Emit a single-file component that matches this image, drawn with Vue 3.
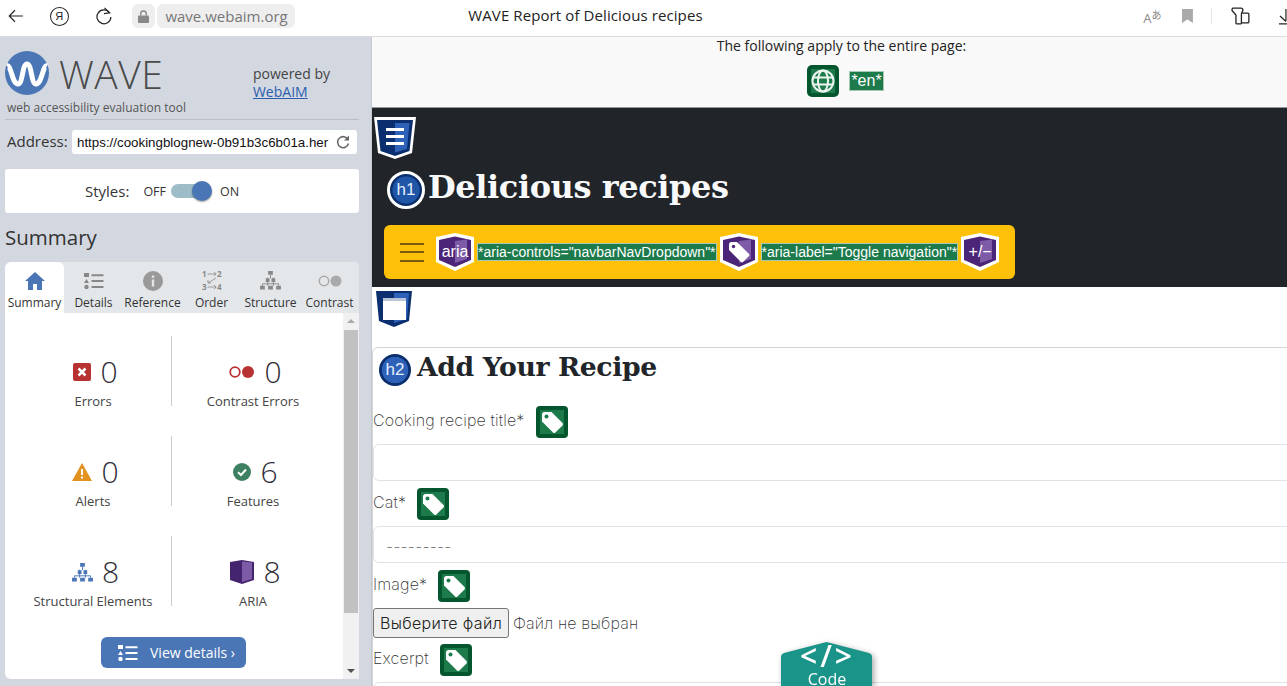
<template>
  <div class="screen">
    <svg class="defs" aria-hidden="true">
      <symbol id="tag" viewBox="0 0 32 32">
        <rect width="32" height="32" rx="4" fill="#04562e" />
        <rect x="4" y="4" width="24" height="24" fill="#1c7a4b" />
        <path d="M6 8.500 Q6 6 8.500 6 L15.500 6 L26.500 17 Q27.600 18.200 26.500 19.400 L19.400 26.500 Q18.200 27.600 17 26.500 L6 15.500Z" fill="#fff" />
        <circle cx="10.500" cy="10.500" r="2" fill="#1c7a4b" />
      </symbol>
      <symbol id="shield" viewBox="0 0 38 38">
        <path d="M0 4 L19 0 L38 4 L38 29 L19 38 L0 29Z" fill="#fff" />
        <path d="M3 7 L19 3.500 L35 7 L35 27 L19 34 L3 27Z" fill="#4b2577" />
        <path d="M19 8 L31 6.500 L31 26 L19 30Z" fill="#7d5ba6" />
      </symbol>
      <symbol id="list" viewBox="0 0 20 16">
        <path d="M0 0h5v4H0z M2.500 6 L5 10H0z" fill="currentColor" />
        <circle cx="2.500" cy="14" r="2.200" fill="currentColor" />
        <path d="M7.500 1.300h12v2h-12z M7.500 7h12v2h-12z M7.500 13h12v2h-12z" fill="currentColor" />
      </symbol>
      <symbol id="tree" viewBox="0 0 22 20">
        <path d="M8.500 0h5v4h-5z M6 7.500h4v4H6z M12 7.500h4v4h-4z M0 15.500h5v4H0z M8.500 15.500h5v4h-5z M17 15.500h5v4h-5z" fill="currentColor" />
        <path d="M11 4v3.500 M8 7v8.500 M14 7v8.500 M2.500 15.500v-2h17v2" stroke="currentColor" stroke-width="1" fill="none" />
      </symbol>
    </svg>

    <header class="chrome">
      <svg class="chrome-back" viewBox="0 0 16 14" width="16" height="14"><path d="M15 7H1.500M7 1.200 1.200 7 7 12.800" fill="none" stroke="#222" stroke-width="1.100" /></svg>
      <span class="chrome-ya">Я</span>
      <svg class="chrome-reload" viewBox="0 0 18 18" width="18" height="18"><path d="M14.500 5.500A7 7 0 1 0 16 10" fill="none" stroke="#222" stroke-width="1.200" /><path d="M9.500 0.800 14.800 5.800 9 6.600" fill="none" stroke="#222" stroke-width="1.200" /></svg>
      <span class="chrome-lock">
        <svg viewBox="0 0 12 14" width="11" height="13"><path d="M3 6V4a3 3 0 0 1 6 0v2" fill="none" stroke="#888" stroke-width="1.500" /><rect y="6" width="12" height="8" rx="1" fill="#888" /></svg>
      </span>
      <span class="chrome-url">wave.webaim.org</span>
      <span class="chrome-title">WAVE Report of Delicious recipes</span>
      <span class="chrome-translate">A<small>あ</small></span>
      <svg class="chrome-mark" viewBox="0 0 11 14" width="11" height="14"><path d="M0 0h11v14L5.500 10.500 0 14z" fill="#aaa" /></svg>
      <span class="chrome-sep"></span>
      <svg class="chrome-collections" viewBox="0 0 19 18" width="19" height="18"><path d="M2 1h8q2 0 2 2l-1.500 4v9q0 1-1 1H6q-1 0-1-1V8L1 3.500Q1 1 2 1Z M11.500 6H17q1 0 1 1v8q0 1-1 1h-6" fill="none" stroke="#222" stroke-width="1.300" /></svg>
      <svg class="chrome-download" viewBox="0 0 8 18" width="8" height="18"><path d="M7 2v12M1 9l6 5.500M0 17h8" fill="none" stroke="#222" stroke-width="1.200" /></svg>
    </header>

    <div class="body">
      <aside class="side">
        <div class="brand">
          <div class="brand-main">
            <div class="brand-logo">
              <svg viewBox="0 0 44 44" width="44" height="44">
                <circle cx="22" cy="22" r="22" fill="#4a76b5" />
                <path d="M2 15 C6 13 7 33 13 33 C18 33 17 13 22 13 C27 13 26 33 31 33 C37 33 38 13 42 15" fill="none" stroke="#fff" stroke-width="5" />
              </svg>
              <span class="brand-name">WAVE</span>
            </div>
            <div class="brand-tag">web accessibility evaluation tool</div>
          </div>
          <div class="brand-by">powered by<br /><a href="#">WebAIM</a></div>
        </div>
        <div class="address">
          <label>Address:</label>
          <div class="address-field">
            <span>https://cookingblognew-0b91b3c6b01a.her</span>
            <svg viewBox="0 0 14 14" width="14" height="14"><path d="M12 4.500A5.500 5.500 0 1 0 12.500 8.500" fill="none" stroke="#666" stroke-width="1.500" /><path d="M13 0.500V5.500H8z" fill="#666" /></svg>
          </div>
        </div>
        <div class="styles">
          <span class="styles-label">Styles:</span>
          <span class="styles-opt">OFF</span>
          <span class="toggle"><i></i></span>
          <span class="styles-opt">ON</span>
        </div>
        <h2 class="side-title">Summary</h2>

        <section class="panel">
          <nav class="tabs">
            <div v-for="tab in tabs" :key="tab.label" class="tab" :class="{ 'tab--on': tab.label === 'Summary' }">
              <span class="tab-icon">
                <svg v-if="tab.label === 'Summary'" viewBox="0 0 20 18" width="20" height="18"><path d="M10 0 20 9h-3v9h-5v-6H8v6H3V9H0Z" fill="#4a76b5" /></svg>
                <svg v-else-if="tab.label === 'Details'" width="20" height="16"><use href="#list" /></svg>
                <svg v-else-if="tab.label === 'Reference'" viewBox="0 0 20 20" width="20" height="20"><circle cx="10" cy="10" r="10" fill="#999" /><path d="M8.800 4.500h2.400v2.300H8.800z M8.800 8.500h2.400v7H8.800z" fill="#e4e7ea" /></svg>
                <svg v-else-if="tab.label === 'Order'" class="order-icon" viewBox="0 0 20 21" width="20" height="21">
                  <text x="0" y="7">1</text>
                  <text x="15" y="7">2</text>
                  <text x="0" y="20">3</text>
                  <text x="15" y="20">4</text>
                  <path d="M5.500 4H14M12 2l2.200 2L12 6 M5.500 17H14M12 15l2.200 2L12 19 M14 8 6 13M6 10v3h3" fill="none" stroke="#888" stroke-width=".8" />
                </svg>
                <svg v-else-if="tab.label === 'Structure'" width="21" height="19"><use href="#tree" /></svg>
                <svg v-else viewBox="0 0 24 12" width="24" height="12"><circle cx="6" cy="6" r="4.700" fill="none" stroke="#aaa" stroke-width="1.500" /><circle cx="18" cy="6" r="5.500" fill="#aaa" /></svg>
              </span>
              <span class="tab-label">{{ tab.label }}</span>
            </div>
          </nav>
          <div class="panel-body">
            <div class="panel-main">
              <div class="stats">
                <div v-for="stat in stats" :key="stat.label" class="stat">
                  <div class="stat-top">
                    <svg v-if="stat.kind === 'error'" viewBox="0 0 18 18" width="18" height="18"><rect width="18" height="18" rx="2" fill="#b93232" /><path d="M5.500 5.500l7 7M12.500 5.500l-7 7" stroke="#fff" stroke-width="2.500" /></svg>
                    <svg v-else-if="stat.kind === 'contrast'" viewBox="0 0 26 12" width="26" height="12"><circle cx="6" cy="6" r="4.800" fill="none" stroke="#b93232" stroke-width="1.800" /><circle cx="19" cy="6" r="6" fill="#b93232" /></svg>
                    <svg v-else-if="stat.kind === 'alert'" viewBox="0 0 20 18" width="20" height="18"><path d="M10 0 20 18H0Z" fill="#e2921e" /><path d="M9 6h2v6H9z M9 13.500h2v2H9z" fill="#fff" /></svg>
                    <svg v-else-if="stat.kind === 'feature'" viewBox="0 0 18 18" width="18" height="18"><circle cx="9" cy="9" r="9" fill="#3d8062" /><path d="M5 9.200 8 12l5-5.500" fill="none" stroke="#fff" stroke-width="2" /></svg>
                    <svg v-else-if="stat.kind === 'tree'" class="stat-tree" width="21" height="19"><use href="#tree" /></svg>
                    <svg v-else viewBox="0 0 24 24" width="24" height="24"><path d="M0 2 12 0 24 2V20L12 24 0 20Z" fill="#45246f" /><path d="M12 1.500 22 2.500V19L12 22Z" fill="#7d5ba6" /></svg>
                    <span class="stat-num">{{ stat.count }}</span>
                  </div>
                  <div class="stat-label">{{ stat.label }}</div>
                </div>
              </div>
              <button type="button" class="view-btn">
                <svg width="20" height="16"><use href="#list" /></svg>
                <span>View details ›</span>
              </button>
            </div>
            <div class="scroll">
              <span class="scroll-up"></span>
              <span class="scroll-thumb"></span>
              <span class="scroll-down"></span>
            </div>
          </div>
        </section>
      </aside>

      <main class="main">
        <div class="page-notes">
          <p>The following apply to the entire page:</p>
          <div class="page-notes-row">
            <span class="globe">
              <svg viewBox="0 0 24 24" width="24" height="24"><circle cx="12" cy="12" r="10.500" fill="none" stroke="#eef5f0" stroke-width="2" /><ellipse cx="12" cy="12" rx="5" ry="10.500" fill="none" stroke="#eef5f0" stroke-width="2" /><path d="M2 8.500h20M2 15.500h20" stroke="#eef5f0" stroke-width="2" /></svg>
            </span>
            <span class="code-mark">*en*</span>
          </div>
        </div>

        <div class="hero">
          <svg class="nav-icon" viewBox="0 0 42 42" width="42" height="42">
            <path d="M0 0h42L38 36 21 42 4 36Z" fill="#fff" />
            <path d="M3 3h36L35.500 34 21 39 6.500 34Z" fill="#0a2e6e" />
            <path d="M21 6h14.500L33 32 21 35.500Z" fill="#2d62b8" />
            <path d="M12 11h18v3H12z M12 18h18v3H12z M12 25h18v3H12z" fill="#fff" />
          </svg>
          <div class="hero-title">
            <span class="badge badge--h1">h1</span>
            <h1>Delicious recipes</h1>
          </div>
          <div class="navbar">
            <span class="burger"><i></i><i></i><i></i></span>
            <span class="aria-icon"><svg width="38" height="38"><use href="#shield" /></svg><b>aria</b></span>
            <span class="code-mark">*aria-controls="navbarNavDropdown"*</span>
            <span class="aria-icon">
              <svg width="38" height="38"><use href="#shield" /></svg>
              <svg class="aria-tag" viewBox="0 0 22 22" width="22" height="22"><path d="M1 3.500Q1 1 3.500 1H9l12 12q.8 1 0 2l-6 6q-1 .8-2 0L1 9Z" fill="#fff" /><circle cx="5.500" cy="5.500" r="1.700" fill="#4b2577" /></svg>
            </span>
            <span class="code-mark">*aria-label="Toggle navigation"*</span>
            <span class="aria-icon"><svg width="38" height="38"><use href="#shield" /></svg><b>+/−</b></span>
          </div>
        </div>

        <div class="content">
          <svg class="window-icon" viewBox="0 0 36 36" width="36" height="36">
            <path d="M0 0h36L33 30 18 36 3 30Z" fill="#0a2e6e" />
            <path d="M18 2h15L31 28 18 32Z" fill="#2d62b8" />
            <path d="M7 7h23v22H7z" fill="#fff" />
            <path d="M7 7h23v3H7z" fill="#b9c4d6" />
          </svg>
          <form class="recipe-card" @submit.prevent>
            <div class="recipe-title">
              <span class="badge badge--h2">h2</span>
              <h2>Add Your Recipe</h2>
            </div>
            <div class="field-label"><label>Cooking recipe title*</label><svg class="tag" width="32" height="32"><use href="#tag" /></svg></div>
            <div class="control"></div>
            <div class="field-label"><label>Cat*</label><svg class="tag" width="32" height="32"><use href="#tag" /></svg></div>
            <div class="control control--select">---------</div>
            <div class="field-label"><label>Image*</label><svg class="tag" width="32" height="32"><use href="#tag" /></svg></div>
            <div class="file">
              <button type="button">Выберите файл</button>
              <span>Файл не выбран</span>
            </div>
            <div class="field-label"><label>Excerpt</label><svg class="tag" width="32" height="32"><use href="#tag" /></svg></div>
            <div class="control"></div>
          </form>
        </div>

        <div class="code-tab">
          <svg viewBox="0 0 91 44" width="91" height="44" preserveAspectRatio="none"><path d="M0 15 Q0 12 3 11 L45.500 0 L88 11 Q91 12 91 15 V44 H0Z" fill="#1a9488" /></svg>
          <span class="code-tab-glyph">&lt;/&gt;</span>
          <span class="code-tab-label">Code</span>
        </div>
      </main>
    </div>
  </div>
</template>

<script setup>
const tabs = [
  { label: 'Summary' },
  { label: 'Details' },
  { label: 'Reference' },
  { label: 'Order' },
  { label: 'Structure' },
  { label: 'Contrast' }
]

const stats = [
  { kind: 'error', count: 0, label: 'Errors' },
  { kind: 'contrast', count: 0, label: 'Contrast Errors' },
  { kind: 'alert', count: 0, label: 'Alerts' },
  { kind: 'feature', count: 6, label: 'Features' },
  { kind: 'tree', count: 8, label: 'Structural Elements' },
  { kind: 'aria', count: 8, label: 'ARIA' }
]
</script>

<style>
html,
body {
  margin: 0;
  overflow: hidden;
}
</style>

<style scoped>
.screen {
  width: 1287px;
  height: 686px;
  overflow: hidden;
  display: flex;
  flex-direction: column;
  font-family: "Open Sans", sans-serif;
  color: #333;
  background: #fff;
}

.defs {
  width: 0;
  height: 0;
  position: absolute;
}

/* browser bar */
.chrome {
  height: 32px;
  flex: none;
  display: flex;
  align-items: center;
  border-bottom: 1px solid #dcdcdc;
  background: #fff;
  padding-left: 8px;
  padding-bottom: 4px;
  color: #222;
}

.chrome-ya {
  margin-left: 26px;
  width: 17px;
  height: 17px;
  border: 1.200px solid #222;
  border-radius: 50%;
  font-size: 11px;
  line-height: 17px;
  text-align: center;
  font-family: "Liberation Sans", sans-serif;
}

.chrome-reload {
  margin-left: 26px;
}

.chrome-lock {
  margin-left: 19px;
  width: 24px;
  height: 24px;
  border-radius: 6px;
  background: #eee;
  display: flex;
  align-items: center;
  justify-content: center;
}

.chrome-url {
  margin-left: 2px;
  width: 139px;
  height: 24px;
  box-sizing: border-box;
  padding-left: 8px;
  border-radius: 6px;
  background: #eee;
  color: #777;
  font-size: 15px;
  line-height: 24px;
  white-space: nowrap;
}

.chrome-title {
  margin: 0 0 2px 173px;
  width: 234px;
  white-space: nowrap;
  font-size: 15px;
  letter-spacing: 0.1px;
  color: #222;
}

.chrome-translate {
  margin-left: 441px;
  width: 18px;
  color: #888;
  font-size: 13px;
  line-height: 14px;
  white-space: nowrap;
}

.chrome-translate small {
  font-size: 10px;
  font-family: "Noto Sans CJK JP", sans-serif;
  vertical-align: 4px;
}

.chrome-mark {
  margin-left: 21px;
}

.chrome-sep {
  margin-left: 18px;
  width: 1px;
  height: 16px;
  background: #e4e4e4;
}

.chrome-collections {
  margin-left: 19px;
}

.chrome-download {
  margin-left: 29px;
}

.body {
  flex: 1;
  min-height: 0;
  display: flex;
}

/* left panel */
.side {
  width: 372px;
  flex: none;
  box-sizing: border-box;
  background: #d3d8e0;
  padding: 0 12px 0 5px;
  border-right: 1px solid #c5c9cf;
}

.brand {
  display: flex;
  justify-content: space-between;
  height: 83px;
  box-sizing: border-box;
  padding-top: 14px;
  border-bottom: 1px solid #b9bdc4;
}

.brand-logo {
  display: flex;
  align-items: center;
  height: 44px;
  gap: 10px;
}

.brand-name {
  font-weight: 300;
  font-size: 39px;
  letter-spacing: 0.5px;
  color: #4a4a4a;
}

.brand-tag {
  font-size: 12px;
  color: #555;
  margin: 4px 0 0 2px;
  white-space: nowrap;
}

.brand-by {
  font-size: 14px;
  line-height: 18px;
  color: #444;
  padding: 14px 29px 0 0;
}

.brand-by a {
  color: #2a5db0;
}

.address {
  display: flex;
  align-items: center;
  justify-content: space-between;
  margin-top: 10px;
  padding-left: 2px;
}

.address label {
  font-size: 15px;
  color: #333;
  padding-bottom: 2px;
}

.address-field {
  width: 285px;
  height: 24px;
  box-sizing: border-box;
  background: #fff;
  border-radius: 3px;
  display: flex;
  align-items: center;
  justify-content: space-between;
  padding: 0 7px 0 5px;
  margin-right: 2px;
  font-family: "Liberation Sans", sans-serif;
  font-size: 13.330px;
  color: #111;
  white-space: nowrap;
  overflow: hidden;
}

.address-field span {
  width: 252px;
  overflow: hidden;
}

.styles {
  margin-top: 15px;
  height: 44px;
  background: #fff;
  border-radius: 3px;
  display: flex;
  align-items: center;
  padding-left: 80px;
}

.styles-label {
  font-size: 15px;
  margin-right: 14px;
}

.styles-opt {
  font-size: 12.500px;
}

.toggle {
  position: relative;
  width: 34px;
  height: 14px;
  border-radius: 7px;
  background: #9dbcc8;
  margin: 0 15px 0 5px;
}

.toggle i {
  position: absolute;
  right: -7px;
  top: -3px;
  width: 20px;
  height: 20px;
  border-radius: 50%;
  background: #4a76b5;
  box-shadow: 0 1px 2px rgba(0, 0, 0, 0.4);
}

.side-title {
  margin: 9px 0 10px;
  font-size: 20.500px;
  line-height: 30px;
  font-weight: 400;
  color: #333;
}

.panel {
  height: 417px;
  border-radius: 6px 6px 0 6px;
  overflow: hidden;
  background: #fff;
  display: flex;
  flex-direction: column;
}

.tabs {
  height: 51px;
  flex: none;
  display: grid;
  grid-template-columns: repeat(6, 59px);
  background: #e4e7ea;
}

.tab {
  display: flex;
  flex-direction: column;
  align-items: center;
  color: #888;
}

.tab--on {
  background: #fff;
  border-radius: 6px 6px 0 0;
}

.tab-icon {
  height: 29px;
  margin-top: 4px;
  display: flex;
  align-items: center;
  justify-content: center;
}

.tab-label {
  font-size: 12px;
  line-height: 16px;
  color: #333;
  white-space: nowrap;
}

.order-icon {
  overflow: visible;
}

.order-icon text {
  font-family: "Open Sans", sans-serif;
  font-size: 8px;
  font-weight: 700;
  fill: #888;
}

.panel-body {
  flex: 1;
  min-height: 0;
  display: flex;
}

.panel-main {
  flex: 1;
  display: flex;
  flex-direction: column;
}

.stats {
  padding: 23px 0 0 10px;
  display: grid;
  grid-template-columns: 157px 162px;
  grid-auto-rows: 70px;
  row-gap: 30px;
}

.stat {
  display: flex;
  flex-direction: column;
  align-items: center;
  justify-content: flex-start;
}

.stat:nth-child(odd) {
  border-right: 1px solid #ccc;
}

.stat-top {
  display: flex;
  align-items: center;
  justify-content: center;
  gap: 9px;
  height: 26px;
  margin: 23px 0 0 5px;
  color: #4a76b5;
}

.stat-num {
  font-size: 30px;
  font-weight: 300;
  line-height: 26px;
  color: #2e2e36;
}

.stat-label {
  margin-top: 8px;
  font-size: 13px;
  line-height: 17px;
  color: #444;
  white-space: nowrap;
}

.view-btn {
  align-self: flex-start;
  margin: 31px 0 0 96px;
  width: 145px;
  height: 31px;
  border: 0;
  border-radius: 6px;
  background: #4a76b5;
  color: #fff;
  font-family: "Open Sans", sans-serif;
  font-size: 14px;
  display: flex;
  align-items: center;
  padding: 0 0 0 17px;
  gap: 12px;
}

.scroll {
  width: 16px;
  flex: none;
  background: #f1f1f1;
  display: flex;
  flex-direction: column;
  align-items: center;
}

.scroll-up,
.scroll-down {
  width: 0;
  height: 0;
  border-left: 4px solid transparent;
  border-right: 4px solid transparent;
  margin: 6px 0;
}

.scroll-up {
  border-bottom: 4px solid #aaa;
}

.scroll-down {
  border-top: 4px solid #505050;
  margin-top: auto;
}

.scroll-thumb {
  width: 14px;
  height: 283px;
  margin-top: 1px;
  background: #c1c1c1;
}

/* page under test */
.main {
  position: relative;
  flex: 1;
  min-width: 0;
  overflow: hidden;
  background: #fff;
}

.page-notes {
  height: 71px;
  box-sizing: border-box;
  background: #f9f9f9;
  border-bottom: 1px solid #999;
  padding-left: 24px;
  text-align: center;
}

.page-notes p {
  margin: 0;
  font-size: 14px;
  line-height: 18px;
  color: #222;
}

.page-notes-row {
  display: flex;
  align-items: center;
  justify-content: center;
  gap: 10px;
  margin: 10px 0 0 8px;
}

.globe {
  width: 32px;
  height: 32px;
  border-radius: 5px;
  background: #04562e;
  display: flex;
  align-items: center;
  justify-content: center;
  position: relative;
}

.globe::before {
  content: "";
  position: absolute;
  inset: 4px;
  background: #1c7a4b;
}

.globe svg {
  position: relative;
}

.code-mark {
  background: #1c7a4b;
  border: 1px solid #a8c8b6;
  color: #fff;
  font-family: "Liberation Sans", sans-serif;
  font-size: 14px;
  line-height: 16px;
  white-space: nowrap;
}

.page-notes .code-mark {
  font-size: 16px;
  padding: 1px;
}

.hero {
  height: 179px;
  box-sizing: border-box;
  background: #212529;
  padding: 9px 0 0 2px;
}

.nav-icon {
  display: block;
}

.hero-title {
  display: flex;
  align-items: center;
  gap: 3px;
  margin: 11px 0 0 13px;
  height: 40px;
}

.hero-title h1 {
  margin: 0;
  padding-bottom: 7px;
  font-family: "DejaVu Serif", serif;
  font-weight: 700;
  font-size: 32px;
  letter-spacing: -0.4px;
  color: #f8f9fa;
  white-space: nowrap;
}

.badge {
  border-radius: 50%;
  display: flex;
  align-items: center;
  justify-content: center;
  color: #e8f0ff;
  font-family: "Liberation Sans", sans-serif;
  flex: none;
}

.badge--h1 {
  width: 32px;
  height: 32px;
  border: 3px solid #fff;
  background: radial-gradient(circle, #1f56a8 58%, #0a2e6e 62%);
  font-size: 17px;
}

.badge--h2 {
  width: 32px;
  height: 32px;
  background: radial-gradient(circle, #2d62b8 57%, #0a2e6e 60%);
  font-size: 17px;
}

.navbar {
  margin: 15px 0 0 10px;
  width: 631px;
  height: 54px;
  box-sizing: border-box;
  background: #ffc107;
  border-radius: 6px;
  display: flex;
  align-items: center;
  padding-left: 16px;
  gap: 3px;
}

.burger {
  width: 24px;
  display: flex;
  flex-direction: column;
  gap: 6.500px;
  margin-right: 9px;
}

.burger i {
  height: 2px;
  background: #7a5a10;
}

.aria-icon {
  position: relative;
  width: 38px;
  height: 38px;
  flex: none;
}

.aria-icon b {
  position: absolute;
  inset: 0;
  display: flex;
  align-items: center;
  justify-content: center;
  color: #fff;
  font-family: "Liberation Sans", sans-serif;
  font-weight: 400;
  font-size: 16px;
}

.aria-tag {
  position: absolute;
  left: 8px;
  top: 8px;
}

.content {
  padding-top: 4px;
}

.window-icon {
  display: block;
  margin-left: 4px;
}

.recipe-card {
  margin-top: 20px;
  margin-right: -8px;
  border: 1px solid #d5d5d5;
  border-radius: 6px 0 0 0;
  height: 360px;
  font-family: Inter, sans-serif;
  font-weight: 250;
  letter-spacing: 0.15px;
  font-size: 16px;
  color: #333;
}

.recipe-title {
  display: flex;
  align-items: center;
  gap: 6px;
  margin: 6px 0 0 6px;
  height: 32px;
}

.recipe-title h2 {
  margin: 0;
  padding-bottom: 7px;
  font-family: "DejaVu Serif", serif;
  font-weight: 700;
  font-size: 26.700px;
  letter-spacing: -0.4px;
  color: #212529;
  white-space: nowrap;
}

.field-label {
  display: flex;
  align-items: center;
  height: 32px;
  gap: 11px;
}

.field-label label {
  padding-bottom: 5px;
}

.recipe-title + .field-label {
  margin-top: 20px;
}

.control {
  margin-top: 6px;
  height: 37px;
  box-sizing: border-box;
  border: 1px solid #dee2e6;
  border-radius: 6px 0 0 6px;
  margin-bottom: 7px;
}

.control--select {
  padding: 9px 0 0 12px;
  line-height: 20px;
  color: #555;
}

.file {
  margin: 6px 0;
  height: 30px;
  display: flex;
  align-items: center;
  gap: 4px;
}

.file button {
  height: 30px;
  width: 136px;
  padding: 0;
  border: 1px solid #767676;
  border-radius: 3px;
  background: #efefef;
  font-family: Inter, sans-serif;
  font-weight: 300;
  letter-spacing: 0.35px;
  font-size: 16px;
  color: #222;
}

.code-tab {
  position: absolute;
  left: 409px;
  bottom: 0;
  width: 91px;
  height: 44px;
  filter: drop-shadow(2px 2px 3px rgba(0, 0, 0, 0.35));
  color: #fff;
  text-align: center;
}

.code-tab svg {
  position: absolute;
  left: 0;
  top: 0;
}

.code-tab-glyph {
  position: absolute;
  left: 2px;
  right: 0;
  top: -1px;
  font-size: 30px;
  font-weight: 600;
  line-height: 30px;
  letter-spacing: 3px;
}

.code-tab-label {
  position: absolute;
  left: 1px;
  right: 0;
  bottom: -2px;
  font-size: 16px;
  line-height: 18px;
}
</style>
